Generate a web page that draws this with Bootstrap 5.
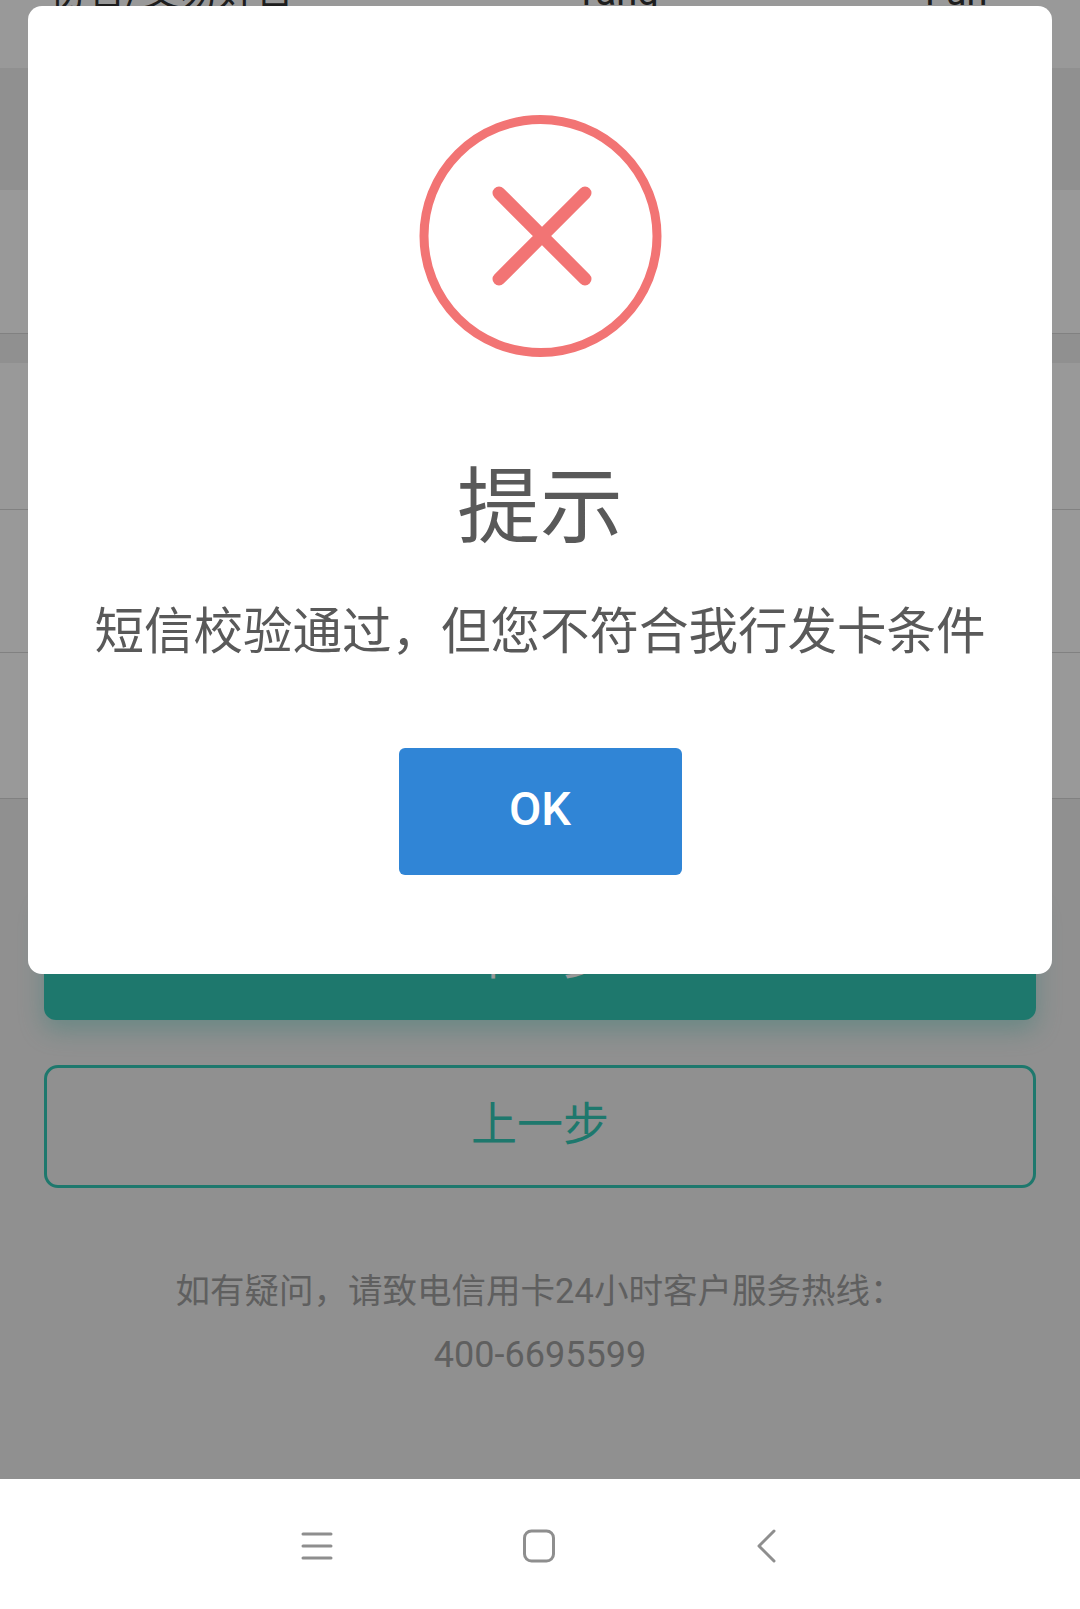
<!DOCTYPE html>
<html lang="zh-CN">
<head>
    <meta charset="UTF-8">
    <meta name="viewport" content="width=device-width, initial-scale=1.0">
    <title>提示</title>
    <link href="https://cdn.jsdelivr.net/npm/bootstrap@5.3.0/dist/css/bootstrap.min.css" rel="stylesheet">
    <style>
        html, body {
            height: 100%;
            overflow: hidden;
        }
        body {
            background-color: #f0f0f0;
            font-family: Roboto, "Noto Sans CJK SC", sans-serif;
        }
        .screen-wrap {
            height: 1609px;
        }
        .page-area {
            height: 1479px;
            overflow: hidden;
        }
        .top-row {
            height: 68px;
            background: #fff;
            overflow: hidden;
        }
        .top-row-text {
            margin-top: -27px;
            padding-left: 50px;
            font-size: 38px;
            line-height: 38px;
            color: #333;
        }
        .top-col-a {
            width: 525px;
        }
        .top-col-b {
            width: 350px;
        }
        .gap-band {
            height: 122px;
        }
        .info-row {
            height: 144px;
            background: #fff;
            border-bottom: 1px solid #d8d8d8;
        }
        .gap-small {
            height: 29px;
        }
        .form-rows {
            background: #fff;
            height: 436px;
            border-bottom: 1px solid #d8d8d8;
        }
        .form-line {
            height: 147px;
            border-bottom: 1px solid #d8d8d8;
        }
        .form-line + .form-line {
            height: 143px;
        }
        .btn-area {
            padding: 98px 44px 0;
        }
        .next-btn {
            height: 123px;
            background: #33c9b6;
            color: #fff;
            border-radius: 12px;
            font-size: 46px;
            box-shadow: 0 10px 24px rgba(51, 201, 182, .35);
        }
        .prev-btn {
            height: 123px;
            margin-top: 45px;
            border: 3px solid #33c9b6;
            border-radius: 14px;
            color: #33c9b6;
            font-size: 46px;
            padding-bottom: 4px;
        }
        .help-text {
            margin-top: 71px;
            color: #9f9f9f;
            font-size: 34.5px;
            line-height: 64px;
        }
        .help-phone {
            font-size: 36px;
        }
        .dim-layer {
            background: rgba(0, 0, 0, .4);
            height: 1479px;
        }
        .alert-box {
            top: 6px;
            left: 28px;
            width: 1024px;
            height: 968px;
            border-radius: 14px;
            padding-top: 108px;
        }
        .alert-icon {
            width: 244px;
            height: 244px;
        }
        .alert-title {
            margin-top: 105px;
            font-size: 83px;
            line-height: 90px;
            color: #595959;
            font-weight: 400;
        }
        .alert-msg {
            margin-top: 44px;
            font-size: 49.5px;
            line-height: 70px;
            color: #595959;
            font-weight: 400;
        }
        .ok-btn {
            width: 283px;
            height: 127px;
            margin-top: 81px;
            padding-bottom: 4px;
            background: #3085d6;
            color: #fff;
            border-radius: 6px;
            font-size: 47px;
            font-weight: 500;
        }
        .soft-nav {
            height: 130px;
            background: #fff;
            z-index: 5;
            padding: 4px 0 0 7px;
        }
        .nav-slot {
            width: 32px;
            height: 34px;
        }
        .nav-home {
            margin-left: 190px;
        }
        .nav-back {
            margin-left: 199px;
        }
    </style>
</head>
<body>
    <div class="screen-wrap position-relative">
        <div class="page-area">
            <div class="top-row">
                <div class="top-row-text d-flex">
                    <span class="top-col-a">协合/交易好日</span>
                    <span class="top-col-b">Tang</span>
                    <span>Fun</span>
                </div>
            </div>
            <div class="gap-band"></div>
            <div class="info-row"></div>
            <div class="gap-small"></div>
            <div class="form-rows">
                <div class="form-line"></div>
                <div class="form-line"></div>
            </div>
            <div class="btn-area">
                <div class="next-btn d-flex align-items-center justify-content-center">下一步</div>
                <div class="prev-btn d-flex align-items-center justify-content-center">上一步</div>
                <div class="help-text text-center">如有疑问，请致电信用卡24小时客户服务热线：<br><span class="help-phone">400-6695599</span></div>
            </div>
        </div>

        <div class="dim-layer position-absolute top-0 start-0 w-100"></div>
        <div class="alert-box position-absolute bg-white text-center">
            <svg class="alert-icon d-block mx-auto" viewBox="0 0 244 244" fill="none" stroke="#f27474">
                <circle cx="122.5" cy="122" r="116.5" stroke-width="9"/>
                <path d="M81 79L167 165M167 79L81 165" stroke-width="13" stroke-linecap="round"/>
            </svg>
            <div class="alert-title">提示</div>
            <div class="alert-msg">短信校验通过，但您不符合我行发卡条件</div>
            <div class="ok-btn d-flex align-items-center justify-content-center mx-auto">OK</div>
        </div>

        <div class="soft-nav d-flex justify-content-center align-items-center position-relative">
            <svg class="nav-slot" viewBox="0 0 32 34" fill="none" stroke="#8e8e8e" stroke-width="3" stroke-linecap="round">
                <path d="M2 5H30M2 17H30M2 29H30"/>
            </svg>
            <svg class="nav-slot nav-home" viewBox="0 0 32 34" fill="none" stroke="#8e8e8e" stroke-width="3">
                <rect x="1.5" y="2" width="29" height="30" rx="7"/>
            </svg>
            <svg class="nav-slot nav-back" viewBox="0 0 32 34" fill="none" stroke="#8e8e8e" stroke-width="3" stroke-linecap="round" stroke-linejoin="round">
                <path d="M20 2L5 17L20 32"/>
            </svg>
        </div>
    </div>
    <script src="https://cdn.jsdelivr.net/npm/bootstrap@5.3.0/dist/js/bootstrap.bundle.min.js"></script>
</body>
</html>
